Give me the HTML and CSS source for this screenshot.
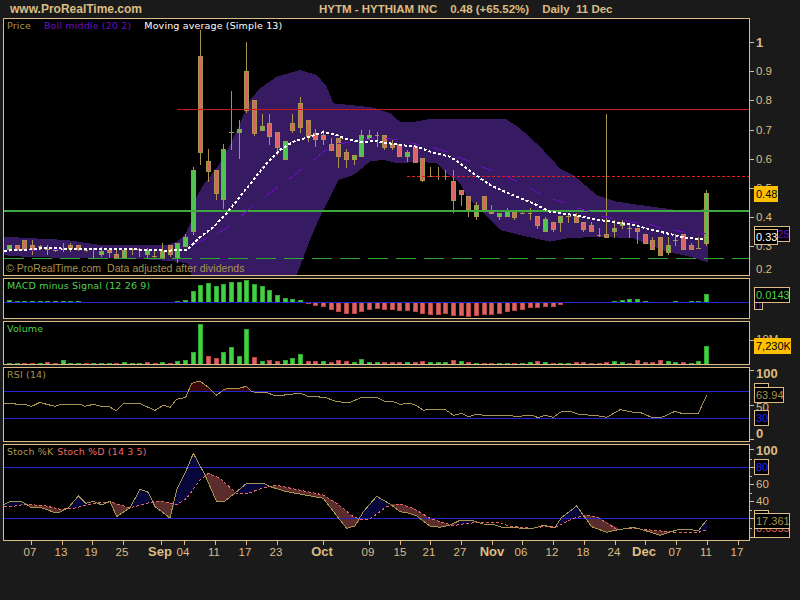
FILE: index.html
```html
<!DOCTYPE html>
<html lang="en">
<head>
<meta charset="utf-8">
<title>HYTM - HYTHIAM INC</title>
<link rel="stylesheet" href="styles.css">
</head>
<body>
<div class="page">
  <header class="head">
    <span class="brand">www.ProRealTime.com</span>
    <span class="quote"><span>HYTM - HYTHIAM INC</span><span>0.48 (+65.52%)</span><span>Daily&nbsp; 11 Dec</span></span>
  </header>

  <section class="row row-main">
    <div class="panel">
      <svg class="plot" viewBox="12 57 2235 768" preserveAspectRatio="none">
        <polygon class="band" points="12,710 100,715 200,720 300,735 500,735 530,725 555,705 575,660 590,590 610,555 660,490 690,435 720,370 750,300 780,265 830,230 900,210 950,225 980,260 1000,310 1070,317 1120,323 1170,339 1200,365 1240,366 1290,357 1400,357 1520,358 1560,385 1620,440 1680,505 1720,525 1790,585 1850,605 1920,615 2030,630 2100,630 2118,622 2124,622 2124,785 2118,785 2070,770 2000,755 1900,715 1800,710 1700,715 1650,725 1580,710 1500,690 1450,640 1400,590 1380,549 1335,516 1310,489 1260,486 1190,489 1150,480 1110,484 1090,502 1060,525 1015,540 960,650 930,720 890,825 575,825 562,790 530,785 400,775 100,772 12,766"/>
        <path class="wick" d="M28 736V756M51 736V752M74 720V752M97 720V764M120 736V750M113 738h14M143 736V764M136 748h14M166 744V756M159 750h14M189 730V756M182 748h14M212 730V756M235 736V752M258 745V755M251 752h14M281 745V775M304 742V770M327 745V775M350 745V775M373 745V775M396 745V765M389 748h14M419 745V770M412 748h14M442 745V775M464 748V775M457 770h14M487 730V775M510 736V770M533 730V790M556 702V738M579 500V705M602 90V495M625 447V546M648 510V600M671 432V627M694 274V450M687 397h14M717 360V477M740 126V338M763 300V408M786 342V390M809 342V435M832 396V465M855 423V477M878 342V400M901 291V400M924 360V425M947 388V440M970 390V435M993 415V450M1016 414V503M1039 447V503M1062 465V495M1085 390V468M1108 390V420M1131 396V440M1124 405h14M1154 405V450M1177 420V450M1199 432V468M1222 450V485M1245 430V486M1268 474V546M1291 500V530M1284 530h14M1314 500V540M1307 530h14M1337 510V540M1330 530h14M1360 510V640M1383 570V618M1406 588V650M1429 606V660M1452 588V627M1475 615V640M1498 640V660M1521 624V650M1544 630V660M1567 630V642M1560 640h14M1590 624V660M1583 639h14M1613 650V686M1636 650V695M1659 666V695M1682 650V695M1705 645V668M1698 650h14M1728 640V668M1751 666V695M1774 666V695M1797 685V710M1790 705h14M1820 342V713M1843 660V713M1866 660V686M1889 675V713M1882 684h14M1912 684V731M1935 702V731M1958 710V747M1981 711V765M2004 711V765M2027 702V738M2020 720h14M2050 702V747M2073 730V747M2096 711V747M2089 745h14M2119 570V737"/>
        <path class="body-red" d="M45 736h12V748h-12zM68 720h12V748h-12zM91 736h12V750h-12zM206 736h12V745h-12zM229 736h12V748h-12zM321 750h12V756h-12zM344 762h12V774h-12zM504 736h12V764h-12zM596 168h12V458h-12zM619 483h12V513h-12zM642 510h12V581h-12zM734 213h12V330h-12zM757 300h12V400h-12zM803 369h12V408h-12zM826 396h12V441h-12zM872 369h12V390h-12zM895 309h12V381h-12zM918 360h12V408h-12zM941 399h12V417h-12zM964 405h12V417h-12zM987 432h12V450h-12zM1010 414h12V468h-12zM1033 456h12V477h-12zM1148 405h12V441h-12zM1171 432h12V441h-12zM1193 432h12V468h-12zM1239 438h12V486h-12zM1262 474h12V540h-12zM1354 543h12V600h-12zM1377 570h12V582h-12zM1400 588h12V627h-12zM1446 588h12V627h-12zM1469 630h12V640h-12zM1538 636h12V651h-12zM1607 650h12V677h-12zM1653 666h12V687h-12zM1722 650h12V668h-12zM1745 666h12V687h-12zM1768 675h12V695h-12zM1814 702h12V713h-12zM1906 684h12V695h-12zM1929 702h12V731h-12zM1952 720h12V747h-12zM1975 711h12V765h-12zM2044 702h12V747h-12zM2067 736h12V747h-12z"/>
        <path class="body-green" d="M22 736h12V748h-12zM298 754h12V764h-12zM367 750h12V774h-12zM436 752h12V764h-12zM481 755h12V774h-12zM527 730h12V774h-12zM550 712h12V738h-12zM573 511h12V695h-12zM665 447h12V598h-12zM711 387h12V398h-12zM780 378h12V390h-12zM849 423h12V477h-12zM1056 465h12V477h-12zM1079 405h12V468h-12zM1102 405h12V416h-12zM1216 456h12V468h-12zM1423 615h12V650h-12zM1492 640h12V650h-12zM1515 630h12V650h-12zM1630 657h12V695h-12zM1676 650h12V668h-12zM1837 684h12V695h-12zM1860 668h12V675h-12zM1998 736h12V756h-12zM2112 579h12V731h-12z"/>
        <path class="line-red" d="M531 328.5H2247"/>
        <path class="line-red-dash" d="M1221 528.5H2247"/>
        <path class="line-green" d="M12 632.5H2247"/>
        <path class="line-green-dash" d="M12 775.5H2247"/>
        <path class="boll" d="M90 752L112 750M160 750L184 748M580 735L620 715M650 703L690 677M722 650L760 615M795 590L835 560M868 537L905 507M940 480L980 448M1010 432L1050 427M1090 418L1125 416M1158 414L1195 420M1228 428L1260 435M1300 443L1340 455M1372 470L1410 485M1444 500L1480 512M1516 527L1552 545M1588 564L1624 582M1660 598L1696 608M1732 624L1770 635M1804 648L1840 655M1876 662L1912 670M1948 672L1984 685M2020 690L2056 697M2092 703L2118 700"/>
        <polyline class="ma" points="12,752 100,748 130,744 200,746 300,746 400,748 500,752 560,750 600,712 640,682 680,640 720,590 760,540 800,490 840,450 880,425 930,410 970,396 1010,405 1040,418 1080,425 1130,424 1200,435 1250,440 1300,458 1350,470 1380,490 1420,520 1470,555 1530,582 1600,610 1650,635 1720,645 1800,660 1900,675 1980,695 2050,712 2100,718 2115,715"/>
      </svg>
      <div class="legend legend-main"><span class="olive">Price</span><span class="purple">Boll middle (20 2)</span><span class="white">Moving average (Simple 13)</span></div>
      <div class="watermark">© ProRealTime.com&nbsp; Data adjusted after dividends</div>
    </div>
    <div class="axis">
      <svg class="scale" viewBox="750 18 50 258" preserveAspectRatio="none">
        <path class="tick" d="M750 42.5h4M750 71.5h4M750 100.5h4M750 130.5h4M750 159.5h4M750 188.5h4M750 217.5h4M750 246.5h4"/>
        <text class="t-big" x="756" y="47">1</text>
        <text x="756" y="75">0.9</text><text x="756" y="104">0.8</text><text x="756" y="134">0.7</text><text x="756" y="163">0.6</text><text x="756" y="192">0.5</text><text x="756" y="221">0.4</text><text x="756" y="250">0.3</text><text x="756" y="273">0.2</text>
      </svg>
      <div class="badge badge-yellow b-price">0.48</div>
      <div class="badge purple b-boll">0.325</div>
      <div class="badge white b-ma">0.33</div>
    </div>
  </section>

  <section class="row row-macd">
    <div class="panel">
      <svg class="plot" viewBox="12 27 2235 117" preserveAspectRatio="none">
        <path class="bar-green" d="M22 90h12V97h-12zM45 94h12V97h-12zM68 94h12V97h-12zM91 94h12V97h-12zM114 94h12V97h-12zM137 94h12V97h-12zM160 94h12V97h-12zM183 94h12V97h-12zM206 94h12V97h-12zM229 94h12V97h-12zM527 94h12V97h-12zM550 91h12V97h-12zM573 65h12V97h-12zM596 47h12V97h-12zM619 41h12V97h-12zM642 49h12V97h-12zM665 44h12V97h-12zM688 38h12V97h-12zM711 38h12V97h-12zM734 32h12V97h-12zM757 44h12V97h-12zM780 50h12V97h-12zM803 62h12V97h-12zM826 77h12V97h-12zM849 86h12V97h-12zM872 89h12V97h-12zM895 92h12V97h-12zM1837 94h12V97h-12zM1860 92h12V97h-12zM1883 89h12V97h-12zM1906 89h12V97h-12zM1929 94h12V97h-12zM2021 94h12V97h-12zM2067 94h12V97h-12zM2090 94h12V97h-12zM2113 73h12V97h-12z"/>
        <path class="bar-red" d="M918 97h12V100h-12zM941 97h12V106h-12zM964 97h12V109h-12zM987 97h12V118h-12zM1010 97h12V124h-12zM1033 97h12V130h-12zM1056 97h12V130h-12zM1079 97h12V124h-12zM1102 97h12V118h-12zM1125 97h12V116h-12zM1148 97h12V118h-12zM1171 97h12V119h-12zM1193 97h12V121h-12zM1216 97h12V121h-12zM1239 97h12V124h-12zM1262 97h12V130h-12zM1285 97h12V133h-12zM1308 97h12V133h-12zM1331 97h12V130h-12zM1354 97h12V136h-12zM1377 97h12V136h-12zM1400 97h12V139h-12zM1423 97h12V136h-12zM1446 97h12V133h-12zM1469 97h12V133h-12zM1492 97h12V130h-12zM1515 97h12V124h-12zM1538 97h12V121h-12zM1561 97h12V118h-12zM1584 97h12V112h-12zM1607 97h12V112h-12zM1630 97h12V109h-12zM1653 97h12V109h-12zM1676 97h12V103h-12z"/>
        <path class="bar-dim" d="M340 98h16v2h-16zM1812 98h16v2h-16zM1973 98h16v2h-16zM1996 98h16v2h-16z"/>
        <path class="line-blue" d="M12 97.5H2247"/>
      </svg>
      <div class="legend"><span class="green">MACD minus Signal (12 26 9)</span></div>
    </div>
    <div class="axis">
      <div class="badge blue b-macd0">0</div>
      <div class="badge green b-macd">0.0143</div>
    </div>
  </section>

  <section class="row row-vol">
    <div class="panel">
      <svg class="plot" viewBox="12 156 2235 126" preserveAspectRatio="none">
        <path class="bar-green" d="M22 279h12V282h-12zM45 280h12V282h-12zM114 280h12V282h-12zM183 271h12V282h-12zM206 280h12V282h-12zM229 280h12V282h-12zM275 280h12V282h-12zM298 280h12V282h-12zM321 280h12V282h-12zM367 277h12V282h-12zM390 279h12V282h-12zM413 280h12V282h-12zM482 277h12V282h-12zM527 274h12V282h-12zM550 271h12V282h-12zM573 247h12V282h-12zM596 163h12V282h-12zM665 247h12V282h-12zM688 232h12V282h-12zM711 259h12V282h-12zM734 178h12V282h-12zM780 274h12V282h-12zM849 271h12V282h-12zM872 265h12V282h-12zM895 253h12V282h-12zM964 274h12V282h-12zM1056 277h12V282h-12zM1079 268h12V282h-12zM1102 277h12V282h-12zM1125 277h12V282h-12zM1216 277h12V282h-12zM1285 277h12V282h-12zM1308 277h12V282h-12zM1331 277h12V282h-12zM1377 274h12V282h-12zM1423 280h12V282h-12zM1492 280h12V282h-12zM1515 280h12V282h-12zM1561 280h12V282h-12zM1584 277h12V282h-12zM1630 277h12V282h-12zM1676 280h12V282h-12zM1699 280h12V282h-12zM1837 274h12V282h-12zM1860 277h12V282h-12zM1998 274h12V282h-12zM2021 277h12V282h-12zM2067 280h12V282h-12zM2090 274h12V282h-12zM2113 229h12V282h-12z"/>
        <path class="bar-red" d="M68 280h12V282h-12zM91 280h12V282h-12zM137 277h12V282h-12zM160 280h12V282h-12zM252 280h12V282h-12zM344 280h12V282h-12zM436 277h12V282h-12zM459 279h12V282h-12zM505 279h12V282h-12zM619 259h12V282h-12zM642 265h12V282h-12zM757 262h12V282h-12zM803 271h12V282h-12zM826 274h12V282h-12zM918 274h12V282h-12zM941 274h12V282h-12zM987 277h12V282h-12zM1010 271h12V282h-12zM1033 274h12V282h-12zM1148 277h12V282h-12zM1171 277h12V282h-12zM1193 277h12V282h-12zM1239 277h12V282h-12zM1262 274h12V282h-12zM1354 271h12V282h-12zM1400 277h12V282h-12zM1446 280h12V282h-12zM1469 280h12V282h-12zM1538 280h12V282h-12zM1607 274h12V282h-12zM1653 280h12V282h-12zM1722 277h12V282h-12zM1745 277h12V282h-12zM1768 280h12V282h-12zM1791 280h12V282h-12zM1814 277h12V282h-12zM1883 280h12V282h-12zM1906 271h12V282h-12zM1929 277h12V282h-12zM1952 277h12V282h-12zM1975 271h12V282h-12zM2044 277h12V282h-12z"/>
      </svg>
      <div class="legend"><span class="green">Volume</span></div>
    </div>
    <div class="axis">
      <svg class="scale" viewBox="750 321 50 44" preserveAspectRatio="none">
        <path class="tick" d="M750 340.5h4"/>
        <text x="756" y="343">10M</text>
      </svg>
      <div class="badge badge-yellow b-vol">7,230K</div>
    </div>
  </section>

  <section class="row row-rsi">
    <div class="panel">
      <svg class="plot" viewBox="12 294 2235 219" preserveAspectRatio="none">
        <polygon class="fill-over" points="565,364 575,340 600,333 625,352 635,364"/>
        <polygon class="fill-over" points="665,364 672,358 690,355 720,354 738,349 755,364"/>
        <path class="line-blue" d="M12 364.5H2247M12 445.5H2247"/>
        <polyline class="osc" points="12,400 40,400 50,403 80,405 95,409 120,397 140,403 165,409 185,403 240,403 255,409 280,403 300,408 325,408 348,422 372,400 420,400 440,410 465,421 490,406 510,412 530,388 557,382 575,340 600,333 625,352 650,376 672,358 690,355 720,354 738,349 755,364 770,368 800,367 825,378 845,376 880,372 900,370 925,379 975,382 1005,393 1030,397 1050,397 1085,382 1130,382 1155,394 1180,395 1200,403 1230,400 1250,407 1270,421 1285,418 1335,418 1360,436 1385,430 1405,440 1430,433 1460,437 1510,438 1520,436 1550,439 1595,436 1615,443 1635,436 1660,442 1685,424 1710,424 1740,434 1785,436 1820,442 1860,419 1900,427 1920,427 1955,442 1985,442 2025,424 2045,430 2095,430 2120,376"/>
      </svg>
      <div class="legend"><span class="olive">RSI (14)</span></div>
    </div>
    <div class="axis">
      <svg class="scale" viewBox="750 367 50 75" preserveAspectRatio="none">
        <path class="tick" d="M750 370.5h4M750 405.5h4M750 439.5h4"/>
        <text class="t-big" x="756" y="378">100</text>
        <text x="756" y="411">50</text>
        <text class="t-big" x="756" y="438">0</text>
      </svg>
      <div class="badge b-rsi-back"></div>
      <div class="badge olive b-rsi">63.94</div>
      <div class="badge blue b-30">30</div>
    </div>
  </section>

  <section class="row row-stoch">
    <div class="panel">
      <svg class="plot" viewBox="12 15 2235 285" preserveAspectRatio="none">
        <path class="fill-up" d="M12 196L35 183L60 183L75 190L75 193L40 199zM205 203L235 168L258 190L270 192L220 205zM395 200L420 148L445 157L460 188L420 195zM522 195L530 150L555 100L580 40L612 105L600 120L560 175L530 195zM705 158L740 130L790 130L800 140L790 143L740 162zM1082 237L1090 215L1130 169L1165 190L1160 200L1110 237zM1375 243L1415 241L1440 249L1400 250L1360 257zM1665 262L1685 232L1730 198L1750 225L1720 235zM2095 275L2120 240L2120 270z"/>
        <path class="fill-down" d="M95 204L120 202L160 216L180 216L195 207L180 208L135 197L75 193zM330 184L350 230L390 204zM465 200L510 234L522 195L490 184L460 185zM612 105L650 185L675 183L705 158L660 115L625 100zM800 138L860 155L970 175L1020 240L1040 265L1065 258L1082 237L1060 230L1010 190L970 165L830 136zM1170 192L1200 215L1220 218L1250 228L1290 258L1320 262L1350 255L1375 243L1360 257L1330 248L1290 235L1240 205L1200 192zM1750 225L1775 260L1820 277L1850 270L1860 268L1790 230L1760 226zM1930 270L1980 286L2030 272L1970 272z"/>
        <path class="line-blue" d="M12 82.5H2247M12 235.5H2247"/>
        <polyline class="stoch-d" points="12,200 40,199 75,193 135,197 180,208 220,205 280,190 330,185 390,204 420,195 460,185 490,184 530,195 560,175 600,120 625,100 660,115 710,160 740,162 790,143 830,136 970,165 1010,190 1060,230 1080,238 1110,237 1160,200 1200,192 1240,205 1290,235 1330,248 1360,257 1400,250 1450,247 1490,247 1530,258 1600,265 1630,260 1665,262 1720,235 1760,226 1790,230 1850,268 1900,265 1930,268 1970,272 2030,277 2095,277 2120,270"/>
        <polyline class="osc" points="12,193 35,183 60,183 75,190 95,204 120,202 160,216 180,216 205,203 235,168 258,190 280,184 305,195 330,184 350,230 390,203 420,148 445,157 465,200 510,234 530,150 555,100 580,40 615,105 650,185 675,183 710,155 740,130 790,130 810,140 860,155 970,175 1020,240 1040,265 1065,258 1090,215 1130,169 1170,192 1200,215 1220,218 1250,228 1290,258 1320,262 1350,255 1380,241 1415,241 1450,252 1480,253 1510,263 1600,265 1630,256 1665,262 1685,232 1730,198 1775,260 1820,277 1850,270 1900,262 1930,270 1980,286 2030,270 2060,268 2095,272 2120,240"/>
      </svg>
      <div class="legend legend-tight"><span class="olive">Stoch %K</span><span class="red">Stoch %D (14 3 5)</span></div>
    </div>
    <div class="axis">
      <svg class="scale" viewBox="750 444 50 97" preserveAspectRatio="none">
        <path class="tick" d="M750 449.5h4M750 467.5h4M750 484.5h4M750 501.5h4M750 518.5h4M750 537.5h4M750 459.5h2M750 476.5h2M750 493.5h2M750 510.5h2M750 528.5h2"/>
        <text class="t-big" x="756" y="455">100</text>
        <text x="756" y="488">60</text>
        <text x="756" y="505">40</text>
      </svg>
      <div class="badge blue b-80">80</div>
      <div class="badge b-stoch-back"></div>
      <div class="badge red b-stoch-d">0.0555</div>
      <div class="badge olive b-stoch-k">17.361</div>
    </div>
  </section>

  <svg class="dates" viewBox="0 541 800 19" preserveAspectRatio="none">
    <path class="tick" d="M31.5 541v4M62.5 541v4M92.5 541v4M123.5 541v4M161.5 541v4M184.5 541v4M215.5 541v4M246.5 541v4M277.5 541v4M323.5 541v4M369.5 541v4M400.5 541v4M430.5 541v4M461.5 541v4M492.5 541v4M522.5 541v4M553.5 541v4M584.5 541v4M615.5 541v4M645.5 541v4M676.5 541v4M707.5 541v4M738.5 541v4"/>
    <text x="30" y="556">07</text><text x="61" y="556">13</text><text x="91" y="556">19</text><text x="122" y="556">25</text>
    <text class="t-month" x="160" y="556">Sep</text>
    <text x="183" y="556">04</text><text x="214" y="556">11</text><text x="245" y="556">17</text><text x="276" y="556">23</text>
    <text class="t-month" x="322" y="556">Oct</text>
    <text x="368" y="556">09</text><text x="400" y="556">15</text><text x="429" y="556">21</text><text x="460" y="556">27</text>
    <text class="t-month" x="492" y="556">Nov</text>
    <text x="521" y="556">06</text><text x="552" y="556">12</text><text x="583" y="556">18</text><text x="614" y="556">24</text>
    <text class="t-month" x="644" y="556">Dec</text>
    <text x="675" y="556">07</text><text x="706" y="556">11</text><text x="737" y="556">17</text>
  </svg>
</div>
</body>
</html>
```

FILE: styles.css
```css
* { box-sizing: border-box; }
html, body { margin: 0; padding: 0; background: #1a1a1a; }
.page {
  width: 800px;
  height: 600px;
  overflow: hidden;
  background: #1a1a1a;
  font-family: "Liberation Sans", Arial, sans-serif;
  color: #dcbc84;
}
.head {
  height: 18px;
  display: flex;
  align-items: center;
  padding-left: 10px;
}
.brand { font-weight: bold; font-size: 12px; width: 309px; }
.quote { display: flex; gap: 13px; font-weight: bold; font-size: 11.5px; }

.row { display: flex; margin-left: 3px; }
.row-macd, .row-vol, .row-rsi, .row-stoch { margin-top: 2px; }
.row-main { height: 258px; }
.row-macd { height: 41px; }
.row-vol { height: 44px; }
.row-rsi { height: 75px; }
.row-stoch { height: 97px; }

.panel {
  position: relative;
  width: 747px;
  height: 100%;
  border: 1px solid #dcbc84;
  background: #000;
}
.plot { display: block; width: 745px; height: 100%; shape-rendering: crispEdges; }
.axis { position: relative; width: 50px; height: 100%; }
.scale { display: block; width: 50px; height: 100%; overflow: visible; shape-rendering: crispEdges; }
.scale text, .dates text { fill: #dcbc84; font-size: 11.5px; }
.scale .t-big { font-weight: bold; font-size: 13px; }
.tick { stroke: #dcbc84; stroke-width: 1; fill: none; }

.legend {
  position: absolute;
  left: 3px;
  top: 0;
  display: flex;
  gap: 11px;
  font: 9.5px/13px "DejaVu Sans", sans-serif;
  letter-spacing: 0.15px;
  white-space: nowrap;
}
.legend-main { gap: 13px; }
.legend-tight { gap: 4px; }
.watermark {
  position: absolute;
  left: 2px;
  bottom: 0;
  font: 10.5px/13px "Liberation Sans", sans-serif;
  letter-spacing: 0.05px;
  color: #a8934f;
  white-space: nowrap;
}
.olive { color: #a8934f; }
.purple { color: #6a10c0; }
.white { color: #fff; }
.green { color: #50d050; }
.red { color: #e86868; }
.blue { color: #2828e0; }

.band { fill: #361b62; stroke: none; }
.wick { stroke: #a8934f; stroke-width: 3; fill: none; }
.body-red { fill: #dc6464; stroke: #a8934f; stroke-width: 3; }
.body-green { fill: #4fc44f; stroke: #a8934f; stroke-width: 3; }
.line-red { stroke: #c81818; stroke-width: 3; fill: none; }
.line-red-dash { stroke: #e81c1c; stroke-width: 3; fill: none; stroke-dasharray: 9 6; }
.line-green { stroke: #3fa83f; stroke-width: 6; fill: none; }
.line-green-dash { stroke: #2fa82f; stroke-width: 3; fill: none; stroke-dasharray: 60 24; }
.boll { stroke: #6a10c0; stroke-width: 3; fill: none; }
.ma { stroke: #fff; stroke-width: 6; fill: none; stroke-dasharray: 9 6; }

.bar-green { fill: #44d044; stroke: #2ea82e; stroke-width: 3; }
.bar-red { fill: #dc6464; stroke: #b84444; stroke-width: 3; }
.bar-dim { fill: #701818; }
.line-blue { stroke: #2424d0; stroke-width: 3; fill: none; }
.osc { stroke: #a8934f; stroke-width: 3; fill: none; }
.fill-over { fill: #3a0808; }
.fill-up { fill: #06063a; }
.fill-down { fill: #5a2c2c; }
.stoch-d { stroke: #e86868; stroke-width: 3; fill: none; stroke-dasharray: 9 6; }

.badge {
  position: absolute;
  left: 4px;
  height: 16px;
  padding: 0 0 0 1px;
  border: 1px solid #dcbc84;
  background: #000;
  font-size: 11px;
  line-height: 14px;
  white-space: nowrap;
  overflow: hidden;
}
.badge-yellow { background: #ffc000; border-color: #ffc000; color: #000; }
.b-price { top: 168px; width: 24px; }
.b-boll { top: 208px; width: 36px; padding-left: 7px; }
.b-ma { top: 211px; width: 24px; }
.b-macd0 { top: 24px; width: 9px; height: 8px; line-height: 6px; padding: 0; }
.b-macd { top: 9px; width: 36px; }
.b-vol { top: 17px; width: 37px; }
.b-rsi-back { top: 16px; width: 15px; }
.b-rsi { top: 20px; width: 30px; }
.b-30 { top: 43px; width: 15px; }
.b-80 { top: 15px; width: 15px; }
.b-stoch-back { top: 66px; width: 15px; }
.b-stoch-d { top: 81px; width: 36px; height: 13px; line-height: 5px; }
.b-stoch-k { top: 69px; width: 36px; }

.dates { display: block; width: 800px; height: 19px; }
.dates text { text-anchor: middle; }
.dates .t-month { font-weight: bold; font-size: 13px; }
```
